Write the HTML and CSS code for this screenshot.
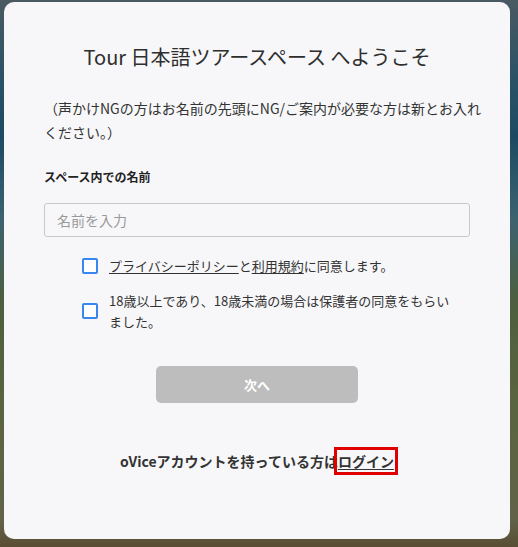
FILE: index.html
```html
<!DOCTYPE html>
<html lang="ja">
<head>
<meta charset="utf-8">
<link rel="stylesheet" href="styles.css">
</head>
<body>
<div class="backdrop">
  <div class="modal">
    <h1 class="title">Tour 日本語ツアースペース へようこそ</h1>
    <p class="desc">（声かけNGの方はお名前の先頭にNG/ご案内が必要な方は新とお入れください。）</p>
    <div class="label">スペース内での名前</div>
    <div class="input">名前を入力</div>
    <div class="checks">
      <div class="check-row">
        <span class="box"></span>
        <span class="check-text"><u>プライバシーポリシー</u>と<u>利用規約</u>に同意します。</span>
      </div>
      <div class="check-row">
        <span class="box"></span>
        <span class="check-text">18歳以上であり、18歳未満の場合は保護者の同意をもらいました。</span>
      </div>
    </div>
    <div class="btn-wrap"><div class="btn">次へ</div></div>
    <div class="login">oViceアカウントを持っている方は<span class="login-link">ログイン</span></div>
  </div>
</div>
</body>
</html>
```
FILE: styles.css
```css
html, body {
  margin: 0;
  padding: 0;
}
body {
  width: 518px;
  height: 547px;
  overflow: hidden;
  font-family: "Noto Sans CJK JP", "Noto Sans", sans-serif;
  color: #333;
  background: linear-gradient(180deg, #4a5a62 0%, #2f5366 12%, #1d4a63 25%, #3c6270 40%, #4d5f3f 55%, #5a6440 75%, #626248 95%, #5a4e34 100%);
}
.backdrop {
  padding: 2px 8px 0 4px;
}
.modal {
  box-sizing: border-box;
  width: 506px;
  height: 537px;
  background: #f7f7f9;
  border-radius: 10px;
  padding: 40px 40px 0 40px;
  display: flex;
  flex-direction: column;
}
.title {
  margin: 0;
  font-size: 20px;
  font-weight: 400;
  line-height: 30px;
  text-align: center;
  color: #2e2e2e;
}
.desc {
  margin: 24px -12px 0 0;
  font-size: 14px;
  line-height: 24px;
  color: #333;
}
.label {
  margin-top: 24px;
  font-size: 12px;
  font-weight: 700;
  line-height: 18px;
  color: #222;
}
.input {
  box-sizing: border-box;
  margin-top: 17px;
  height: 34px;
  border: 1px solid #c8c8c8;
  border-radius: 3px;
  background: #f7f7f9;
  padding-left: 12px;
  font-size: 14px;
  line-height: 32px;
  color: #999;
}
.checks {
  padding-left: 38px;
  padding-right: 10px;
  margin-top: 18px;
  display: flex;
  flex-direction: column;
  gap: 14px;
}
.check-row {
  display: flex;
  align-items: center;
  gap: 11px;
}
.box {
  flex: none;
  box-sizing: border-box;
  width: 16px;
  height: 16px;
  border: 2px solid #3a86f0;
  border-radius: 2px;
  background: #fff;
}
.check-text {
  font-size: 13px;
  line-height: 21px;
  color: #333;
  width: 346px;
}
.check-text u {
  text-underline-offset: 2px;
}
.btn-wrap {
  margin-top: 34px;
  display: flex;
  justify-content: center;
}
.btn {
  width: 202px;
  height: 37px;
  border-radius: 5px;
  background: #bdbdbd;
  color: #fff;
  font-size: 13px;
  font-weight: 700;
  line-height: 37px;
  text-align: center;
}
.login {
  margin-top: 48px;
  text-align: center;
  font-size: 14px;
  font-weight: 700;
  line-height: 20px;
  color: #333;
}
.login-link {
  text-decoration: underline;
  text-underline-offset: 2px;
  outline: 3px solid #e00000;
  outline-offset: 1px;
}
```
